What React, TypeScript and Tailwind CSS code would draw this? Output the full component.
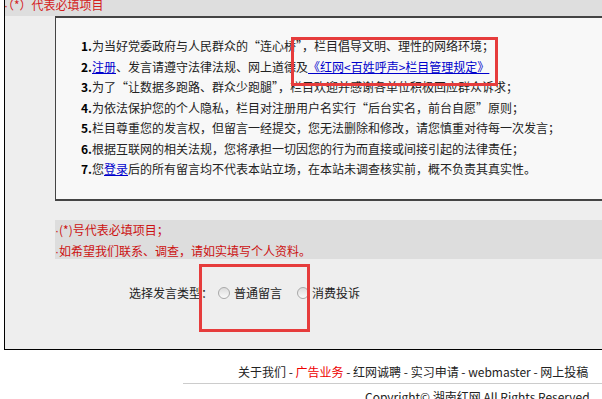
import React from 'react';

const lines: React.ReactNode[] = [
  <>为当好党委政府与人民群众的“连心桥”，栏目倡导文明、理性的网络环境；</>,
  <>
    <a className="text-[#0000cc] underline">注册</a>、发言请遵守法律法规、网上道德及
    <a className="text-[#0000cc] underline">《红网&lt;百姓呼声&gt;栏目管理规定》</a>
  </>,
  <>为了“让数据多跑路、群众少跑腿”，栏目欢迎并感谢各单位积极回应群众诉求；</>,
  <>为依法保护您的个人隐私，栏目对注册用户名实行“后台实名，前台自愿”原则；</>,
  <>栏目尊重您的发言权，但留言一经提交，您无法删除和修改，请您慎重对待每一次发言；</>,
  <>根据互联网的相关法规，您将承担一切因您的行为而直接或间接引起的法律责任；</>,
  <>
    您<a className="text-[#0000cc] underline">登录</a>后的所有留言均不代表本站立场，在本站未调查核实前，概不负责其真实性。
  </>,
];

const Dot = () => <span style={{ fontFamily: '"Liberation Sans", sans-serif' }}>·</span>;

const Radio = () => (
  <span className="inline-block w-[12px] h-[12px] rounded-full border border-[#a8a8a8] bg-gradient-to-b from-[#dcdcdc] to-[#fafafa] shrink-0" />
);

export default function App() {
  return (
    <div
      className="relative w-[602px] h-[399px] overflow-hidden bg-white text-[12px] text-[#222]"
      style={{ fontFamily: '"Noto Sans CJK SC", "Noto Sans", sans-serif' }}
    >
      <div className="ml-[4px] w-[700px] h-[350px] border-l border-b border-black bg-[#eeeeee]">
        <div className="h-[16px] bg-[#dedede] overflow-hidden">
          <div className="-mt-[5px] -ml-[1px] leading-[20px] text-[#d42020] whitespace-nowrap">
            <Dot />（*）代表必填项目
          </div>
        </div>

        <div className="ml-[50px] border-t-2 border-b-2 border-l border-[#444] bg-[#f8f8f8] pt-[18px] pb-[19px] pl-[25px]">
          {lines.map((l, i) => (
            <div key={i} className="leading-[20.5px] whitespace-nowrap">
              <b className="text-black">{i + 1}.</b>
              {l}
            </div>
          ))}
        </div>

        <div className="ml-[50px] mt-[20px] h-[39px] bg-[#dddddd] text-[#cc1111] leading-[20px]">
          <div className="-mt-[1px]">
            <Dot />(*)号代表必填项目；
          </div>
          <div>
            <Dot />如希望我们联系、调查，请如实填写个人资料。
          </div>
        </div>

        <div className="mt-[24px] pl-[124px] flex items-center leading-[20px]">
          <span>选择发言类型：</span>
          <span className="ml-[5px] flex items-center gap-[4px]">
            <Radio />
            <span>普通留言</span>
          </span>
          <span className="ml-[15px] flex items-center gap-[3px]">
            <Radio />
            <span>消费投诉</span>
          </span>
        </div>
      </div>

      <div className="mt-[12px] ml-[183px] border-b border-[#cccccc] pb-[1px]">
        <div className="pl-[55px] leading-[20px] whitespace-nowrap text-[#222]">
          关于我们 - <span className="text-[#e00]">广告业务</span> - 红网诚聘 - 实习申请 - webmaster - 网上投稿
        </div>
      </div>
      <div className="pl-[365px] mt-[3px] leading-[20px] whitespace-nowrap text-[#222]">
        Copyright© 湖南红网 All Rights Reserved
      </div>

      <div className="absolute left-[291px] top-[37px] w-[207px] h-[49px] border-[3px] border-[#e63c3c]" />
      <div className="absolute left-[199px] top-[264px] w-[111px] h-[68px] border-[3px] border-[#e63c3c]" />
    </div>
  );
}
